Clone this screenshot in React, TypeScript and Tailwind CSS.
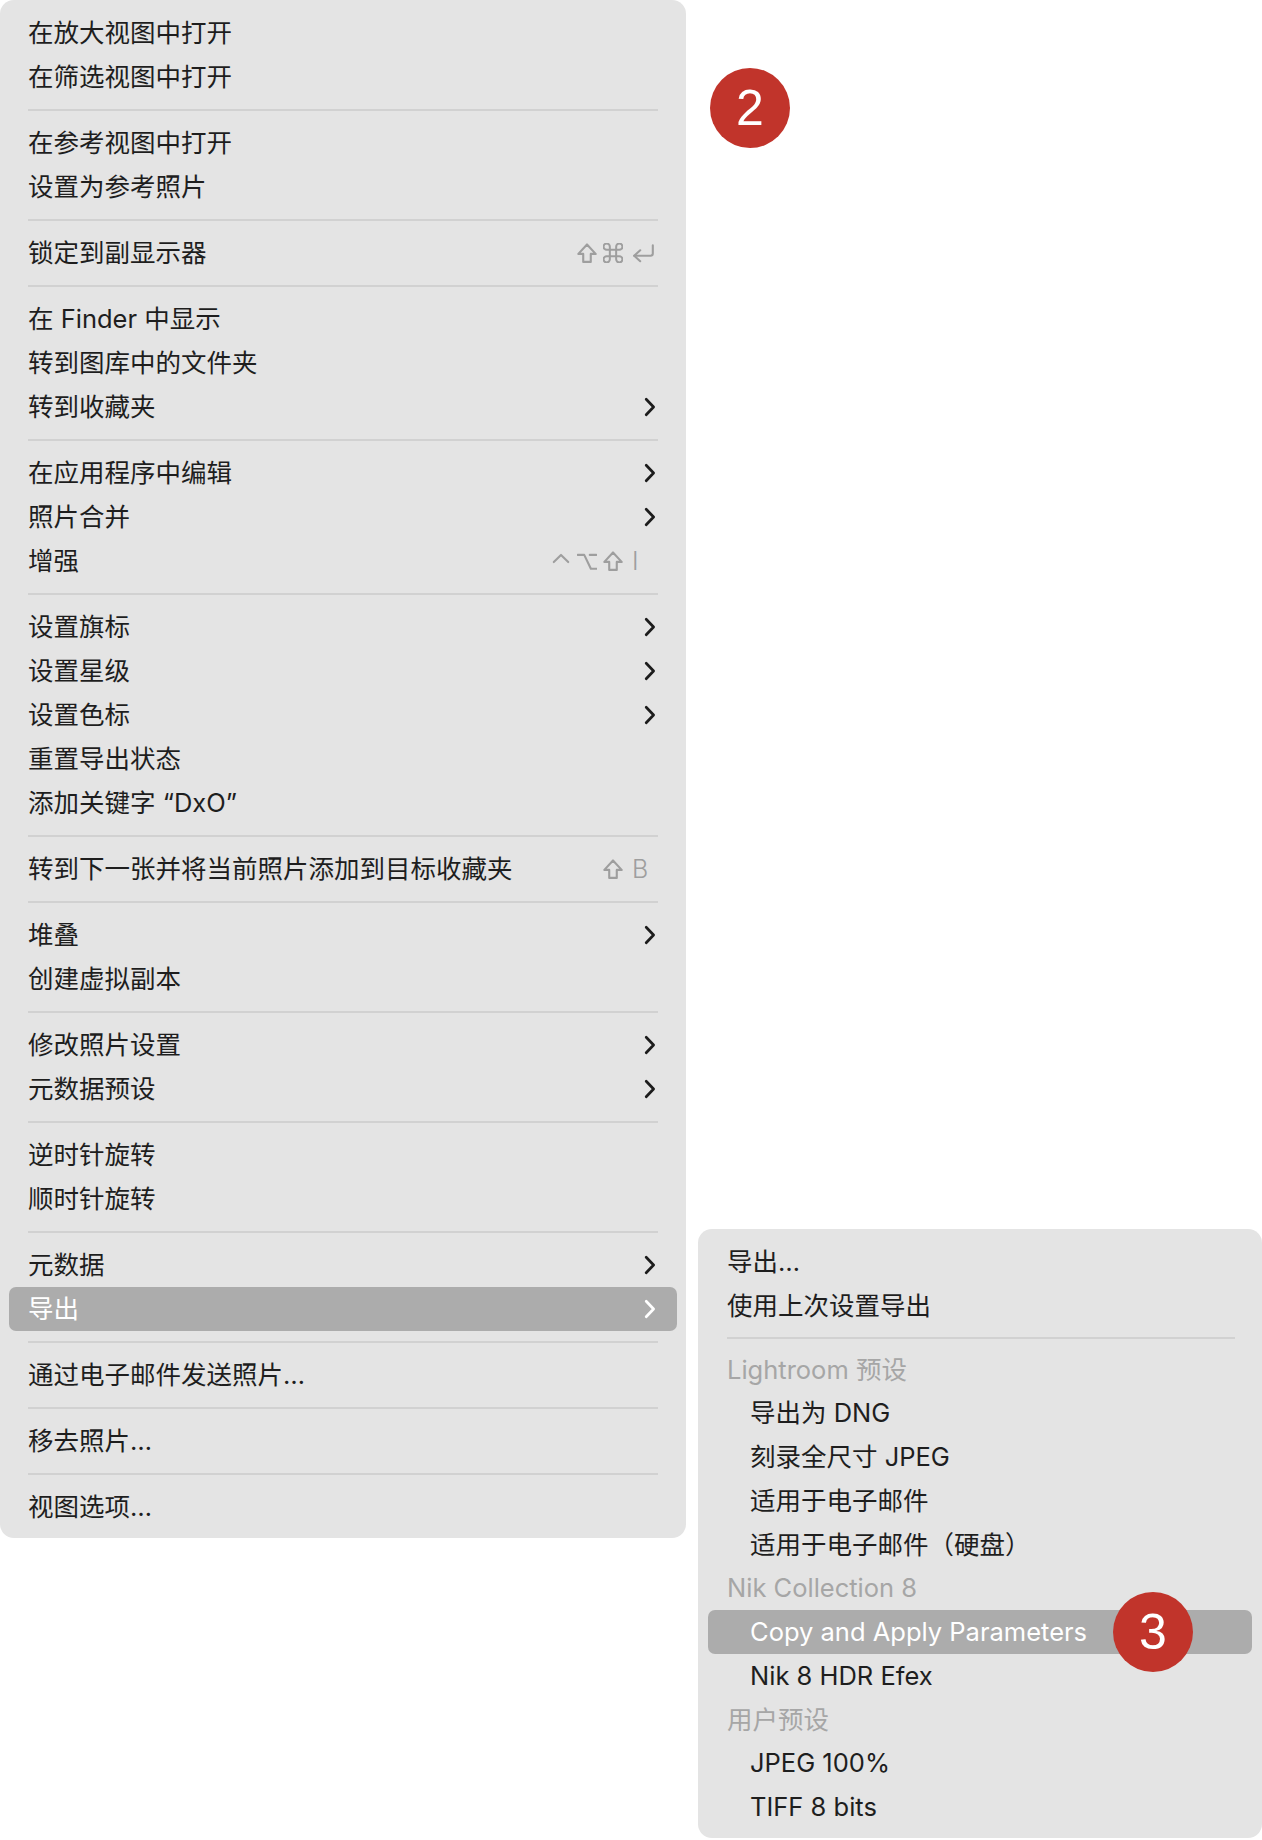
import type { ReactNode } from "react";

type Key = "shift" | "cmd" | "return" | "ctrl" | "opt";

type Item =
	| { kind: "sep" }
	| {
			kind: "item";
			label: string;
			sub?: boolean;
			active?: boolean;
			mods?: Key[];
			key?: Key | string;
	  };

const FONT = {
	fontFamily: 'Inter, "Noto Sans CJK SC", "Noto Sans", sans-serif',
};

const it = (label: string, extra: Partial<Extract<Item, { kind: "item" }>> = {}): Item => ({
	kind: "item",
	label,
	...extra,
});
const sep: Item = { kind: "sep" };

const MAIN: Item[] = [
	it("在放大视图中打开"),
	it("在筛选视图中打开"),
	sep,
	it("在参考视图中打开"),
	it("设置为参考照片"),
	sep,
	it("锁定到副显示器", { mods: ["shift", "cmd"], key: "return" }),
	sep,
	it("在 Finder 中显示"),
	it("转到图库中的文件夹"),
	it("转到收藏夹", { sub: true }),
	sep,
	it("在应用程序中编辑", { sub: true }),
	it("照片合并", { sub: true }),
	it("增强", { mods: ["ctrl", "opt", "shift"], key: "I" }),
	sep,
	it("设置旗标", { sub: true }),
	it("设置星级", { sub: true }),
	it("设置色标", { sub: true }),
	it("重置导出状态"),
	it("添加关键字 “DxO”"),
	sep,
	it("转到下一张并将当前照片添加到目标收藏夹", { mods: ["shift"], key: "B" }),
	sep,
	it("堆叠", { sub: true }),
	it("创建虚拟副本"),
	sep,
	it("修改照片设置", { sub: true }),
	it("元数据预设", { sub: true }),
	sep,
	it("逆时针旋转"),
	it("顺时针旋转"),
	sep,
	it("元数据", { sub: true }),
	it("导出", { sub: true, active: true }),
	sep,
	it("通过电子邮件发送照片…"),
	sep,
	it("移去照片…"),
	sep,
	it("视图选项…"),
];

function KeyGlyph({ k }: { k: Key }) {
	const common = {
		width: 20,
		height: 20,
		viewBox: "3 3 18 18",
		fill: "none",
		stroke: "currentColor",
		strokeWidth: 1.9,
		strokeLinecap: "round" as const,
		strokeLinejoin: "round" as const,
	};
	switch (k) {
		case "shift":
			return (
				<svg {...common}>
					<path d="M8.6 20v-7.2H4.2L12 4.3l7.8 8.5h-4.4V20z" />
				</svg>
			);
		case "cmd":
			return (
				<svg {...common} viewBox="2.5 2.5 19 19">
					<path d="M15 6v12a3 3 0 1 0 3-3H6a3 3 0 1 0 3 3V6a3 3 0 1 0-3 3h12a3 3 0 1 0-3-3" />
				</svg>
			);
		case "return":
			return (
				<svg {...common} width={23} height={20} viewBox="2 3 21 18">
					<path d="M21 5v7.5a2 2 0 0 1-2 2H4" />
					<path d="M9.5 9.5L4 14.5l5.5 5" />
				</svg>
			);
		case "ctrl":
			return (
				<svg {...common}>
					<path d="M5.5 13l6.5-6.5 6.5 6.5" />
				</svg>
			);
		case "opt":
			return (
				<svg {...common}>
					<path d="M3.5 6.5h6l6 12.5h5" />
					<path d="M14.5 6.5h6" />
				</svg>
			);
	}
}

function Chevron({ white }: { white?: boolean }) {
	return (
		<svg
			width="12"
			height="20"
			viewBox="0 0 12 20"
			fill="none"
			stroke={white ? "#ffffff" : "#1c1c1c"}
			strokeWidth="2.7"
			strokeLinecap="round"
			strokeLinejoin="round"
			className="mr-[2px]"
		>
			<path d="M2.2 2.2L9.6 10l-7.4 7.8" />
		</svg>
	);
}

function Shortcut({ mods, k }: { mods: Key[]; k?: Key | string }) {
	return (
		<div className="flex items-center text-[#9e9e9e]">
			<div className="flex items-center gap-[6px]">
				{mods.map((m, i) => (
					<KeyGlyph key={i} k={m} />
				))}
			</div>
			<div className="ml-[9px] flex w-[26px] items-center">
				{k === "return" ? (
					<KeyGlyph k="return" />
				) : (
					<span className="text-[25px] font-light leading-none">{k}</span>
				)}
			</div>
		</div>
	);
}

function Row({
	label,
	sub,
	active,
	mods,
	keyName,
	indent,
	header,
	inset,
	children,
}: {
	label: string;
	sub?: boolean;
	active?: boolean;
	mods?: Key[];
	keyName?: Key | string;
	indent?: boolean;
	header?: boolean;
	inset: "main" | "sub";
	children?: ReactNode;
}) {
	return (
		<div
			className={`flex items-center rounded-[7px] ${
				inset === "main" ? "mx-[9px] h-[44px] px-[19px]" : "mx-[10px] h-[43.75px] pl-[19px] pr-[17px]"
			} ${active ? "bg-[#acacac] text-white" : header ? "text-[#a6a6a6]" : "text-[#1e1e1e]"}`}
		>
			<span className={`text-[25.5px] leading-none ${indent ? "pl-[23px]" : ""}`}>{label}</span>
			<div className="ml-auto flex items-center">
				{mods && <Shortcut mods={mods} k={keyName} />}
				{sub && <Chevron white={active} />}
			</div>
			{children}
		</div>
	);
}

function Separator({ className }: { className: string }) {
	return (
		<div className={`flex items-center ${className}`}>
			<div className="h-[2px] w-full bg-[#d1d1d1]" />
		</div>
	);
}

function Badge({ n }: { n: string }) {
	return (
		<div
			className="flex h-[80px] w-[80px] items-center justify-center rounded-full bg-[#c1342b] text-[50px] leading-none text-white"
			style={{ fontFamily: '"Liberation Sans", Arial, sans-serif' }}
		>
			{n}
		</div>
	);
}

export default function App() {
	return (
		<div className="h-[1840px] w-[1262px] overflow-hidden bg-white" style={FONT}>
			<div className="flex items-start gap-[12px]">
				{/* main context menu */}
				<div className="w-[686px] shrink-0 rounded-[14px] bg-[#e4e4e4] pb-[9px] pt-[11px]">
					{MAIN.map((m, i) =>
						m.kind === "sep" ? (
							<Separator key={i} className="h-[22px] px-[28px]" />
						) : (
							<Row
								key={i}
								inset="main"
								label={m.label}
								sub={m.sub}
								active={m.active}
								mods={m.mods}
								keyName={m.key}
							/>
						),
					)}
				</div>

				<div className="flex w-[564px] shrink-0 flex-col">
					<div className="ml-[12px] mt-[68px]">
						<Badge n="2" />
					</div>

					{/* export submenu */}
					<div className="relative mt-[1081px] rounded-[14px] bg-[#e4e4e4] pb-[9px] pt-[11px]">
						<Row inset="sub" label="导出…" />
						<Row inset="sub" label="使用上次设置导出" />
						<Separator className="h-[20px] pl-[29px] pr-[27px]" />
						<Row inset="sub" header label="Lightroom 预设" />
						<Row inset="sub" indent label="导出为 DNG" />
						<Row inset="sub" indent label="刻录全尺寸 JPEG" />
						<Row inset="sub" indent label="适用于电子邮件" />
						<Row inset="sub" indent label="适用于电子邮件（硬盘）" />
						<Row inset="sub" header label="Nik Collection 8" />
						<Row inset="sub" indent active label="Copy and Apply Parameters" />
						<Row inset="sub" indent label="Nik 8 HDR Efex" />
						<Row inset="sub" header label="用户预设" />
						<Row inset="sub" indent label="JPEG 100%" />
						<Row inset="sub" indent label="TIFF 8 bits" />

						<div className="absolute left-[415px] top-[363px]">
							<Badge n="3" />
						</div>
					</div>
				</div>
			</div>
		</div>
	);
}
